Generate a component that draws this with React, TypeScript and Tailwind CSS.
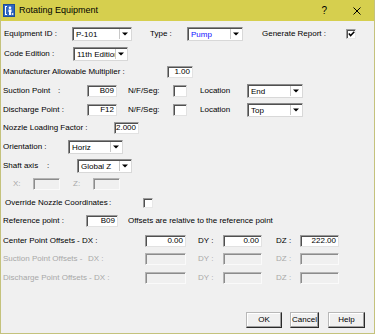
import React from "react";

type C = { className?: string; children?: React.ReactNode };

function Row({ className = "", children }: C) {
  return <div className={`flex h-[15px] shrink-0 items-center ${className}`}>{children}</div>;
}

function L({ className = "", children }: C) {
  return <div className={`shrink-0 whitespace-pre ${className}`}>{children}</div>;
}

function Sel({ className = "", text, blue }: { className?: string; text: string; blue?: boolean }) {
  return (
    <div
      className={`flex h-[14px] shrink-0 items-stretch border border-t-[#8a8a8a] border-l-[#8a8a8a] border-b-[#d8d8d8] border-r-[#d8d8d8] bg-white shadow-[inset_1px_1px_0_#505050] ${className}`}
    >
      <div
        className={`flex-1 overflow-hidden whitespace-nowrap pl-[3px] pt-[1px] leading-[11px] ${
          blue ? "text-[#1010ff]" : "text-black"
        }`}
      >
        {text}
      </div>
      <div className="mr-[1px] my-[1px] flex w-[11px] items-center justify-center border-l border-l-[#c8c8c8] bg-white">
        <svg width="6" height="4" viewBox="0 0 6 4">
          <path d="M0 0.5H6L3 3.5Z" fill="#000" />
        </svg>
      </div>
    </div>
  );
}

function Inp({ className = "", value = "", disabled }: { className?: string; value?: string; disabled?: boolean }) {
  return disabled ? (
    <div
      className={`h-[12px] shrink-0 border border-t-[#b4b4b4] border-l-[#b4b4b4] border-b-[#fafafa] border-r-[#fafafa] bg-[#f0f0f0] shadow-[inset_1px_1px_0_#8c8c8c] ${className}`}
    />
  ) : (
    <div
      className={`h-[12px] shrink-0 border border-t-[#9a9a9a] border-l-[#9a9a9a] border-b-[#e2e2e2] border-r-[#e2e2e2] bg-white pr-[2px] text-right leading-[10px] shadow-[inset_1px_1px_0_#505050] ${className}`}
    >
      {value}
    </div>
  );
}

function Chk({ checked, className = "" }: { checked?: boolean; className?: string }) {
  return (
    <div
      className={`flex h-[10px] w-[10px] shrink-0 items-center justify-center border border-t-[#9a9a9a] border-l-[#9a9a9a] border-b-[#e8e8e8] border-r-[#e8e8e8] bg-white shadow-[inset_1px_1px_0_#505050] ${className}`}
    >
      {checked && (
        <svg width="7" height="6" viewBox="0 0 7 6">
          <path d="M0.8 2.6L2.6 4.6L6.3 0.8" stroke="#000" strokeWidth="1.5" fill="none" />
        </svg>
      )}
    </div>
  );
}

function Btn({ className = "", children }: C) {
  return (
    <div
      className={`flex h-[16px] shrink-0 items-center justify-center border border-t-[#b8b8b8] border-l-[#b8b8b8] border-b-[#2a2a2a] border-r-[#2a2a2a] bg-[#f0f0f0] shadow-[inset_-1px_-1px_0_#a0a0a0,inset_1px_1px_0_#ffffff] ${className}`}
    >
      {children}
    </div>
  );
}

export default function App() {
  return (
    <div className="h-[334px] w-[375px] overflow-hidden border-x border-b border-[#c4c27c] bg-[#f0f0f0] font-['Liberation_Sans',Arial,sans-serif] text-[8px] leading-[10px] text-black">
      {/* Title bar */}
      <div className="flex h-[21px] items-center bg-[#d6cf4e] pl-[2px] pr-[13px]">
        <svg width="12" height="13" viewBox="0 0 12 13" className="shrink-0">
          <rect x="0" y="0" width="12" height="13" fill="#1b4c9c" />
          <rect x="1" y="1" width="10" height="11" fill="#2f66c0" />
          <path d="M2 2H4V3H3V10H4V11H2Z" fill="#fff" />
          <circle cx="7" cy="3.8" r="1.3" fill="#fff" />
          <path d="M5.5 5.5H8.5V8H8V11H6V8H5.5Z" fill="#fff" />
          <rect x="8.8" y="9" width="1.5" height="2" fill="#e8e8e8" />
        </svg>
        <div className="ml-[4px] text-[9px] leading-[11px]">Rotating Equipment</div>
        <div className="flex-1" />
        <div className="text-[10px] leading-[12px]">?</div>
        <svg width="8" height="8" viewBox="0 0 8 8" className="ml-[26px] shrink-0">
          <path d="M0.5 0.5L7.5 7.5M7.5 0.5L0.5 7.5" stroke="#000" strokeWidth="1" />
        </svg>
      </div>

      <div className="flex flex-col">
        <Row className="mt-[5px] pl-[3px]">
          <L className="w-[68px]">Equipment ID :</L>
          <Sel className="w-[60px]" text="P-101" />
          <L className="ml-[18px] w-[37px]">Type :</L>
          <Sel className="w-[56px]" text="Pump" blue />
          <L className="ml-[19px] w-[84px]">Generate Report :</L>
          <Chk checked />
        </Row>

        <Row className="mt-[5px] pl-[3px]">
          <L className="w-[69px]">Code Edition :</L>
          <Sel className="w-[55px]" text="11th Edition" />
        </Row>

        <Row className="mt-[3px] pl-[2px]">
          <L className="w-[164px]">Manufacturer Allowable Multiplier :</L>
          <Inp className="w-[26px]" value="1.00" />
        </Row>

        <Row className="mt-[4px] pl-[2px]">
          <L className="w-[55px]">Suction Point</L>
          <L className="w-[29px]">:</L>
          <Inp className="w-[30px]" value="B09" />
          <L className="ml-[11px] w-[45px]">N/F/Seg:</L>
          <Inp className="w-[14px]" />
          <L className="ml-[13px] w-[47px]">Location</L>
          <Sel className="w-[56px]" text="End" />
        </Row>

        <Row className="mt-[4px] pl-[2px]">
          <L className="w-[84px]">Discharge Point :</L>
          <Inp className="w-[30px]" value="F12" />
          <L className="ml-[11px] w-[45px]">N/F/Seg:</L>
          <Inp className="w-[14px]" />
          <L className="ml-[13px] w-[47px]">Location</L>
          <Sel className="w-[56px]" text="Top" />
        </Row>

        <Row className="mt-[3px] pl-[2px]">
          <L className="w-[111px]">Nozzle Loading Factor :</L>
          <Inp className="w-[25px]" value="2.000" />
        </Row>

        <Row className="mt-[4px] pl-[2px]">
          <L className="w-[65px]">Orientation :</L>
          <Sel className="w-[55px]" text="Horiz" />
        </Row>

        <Row className="mt-[4px] pl-[2px]">
          <L className="w-[44px]">Shaft axis</L>
          <L className="w-[30px]">:</L>
          <Sel className="w-[55px]" text="Global Z" />
        </Row>

        <Row className="mt-[3px] pl-[12px] text-[#a8a8a8]">
          <L className="w-[20px]">X:</L>
          <Inp className="w-[27px]" disabled />
          <L className="ml-[13px] w-[20px]">Z:</L>
          <Inp className="w-[27px]" disabled />
        </Row>

        <Row className="mt-[4px] pl-[4px]">
          <L className="w-[104px]">Override Nozzle Coordinates</L>
          <L className="w-[34px]">:</L>
          <Chk />
        </Row>

        <Row className="mt-[3px] pl-[2px]">
          <L className="w-[83px]">Reference point :</L>
          <Inp className="w-[32px]" value="B09" />
          <L className="ml-[10px]">Offsets are relative to the reference point</L>
        </Row>

        <Row className="mt-[5px] pl-[2px]">
          <L className="w-[79px]">Center Point Offsets -</L>
          <L className="w-[63px]">DX :</L>
          <Inp className="w-[41px]" value="0.00" />
          <L className="ml-[12px] w-[25px]">DY :</L>
          <Inp className="w-[39px]" value="0.00" />
          <L className="ml-[14px] w-[24px]">DZ :</L>
          <Inp className="w-[39px]" value="222.00" />
        </Row>

        <Row className="mt-[3px] pl-[2px] text-[#a8a8a8]">
          <L className="w-[85px]">Suction Point Offsets -</L>
          <L className="w-[57px]">DX :</L>
          <Inp className="w-[41px]" disabled />
          <L className="ml-[12px] w-[25px]">DY :</L>
          <Inp className="w-[39px]" disabled />
          <L className="ml-[14px] w-[24px]">DZ :</L>
          <Inp className="w-[39px]" disabled />
        </Row>

        <Row className="mt-[4px] pl-[2px] text-[#a8a8a8]">
          <L className="w-[142px]">Discharge Point Offsets - DX :</L>
          <Inp className="w-[41px]" disabled />
          <L className="ml-[12px] w-[25px]">DY :</L>
          <Inp className="w-[39px]" disabled />
          <L className="ml-[14px] w-[24px]">DZ :</L>
          <Inp className="w-[39px]" disabled />
        </Row>

        <div className="mt-[27px] flex justify-end pr-[9px]">
          <Btn className="w-[36px]">OK</Btn>
          <Btn className="ml-[8px] w-[29px]">Cancel</Btn>
          <Btn className="ml-[9px] w-[37px]">Help</Btn>
        </div>
      </div>
    </div>
  );
}
